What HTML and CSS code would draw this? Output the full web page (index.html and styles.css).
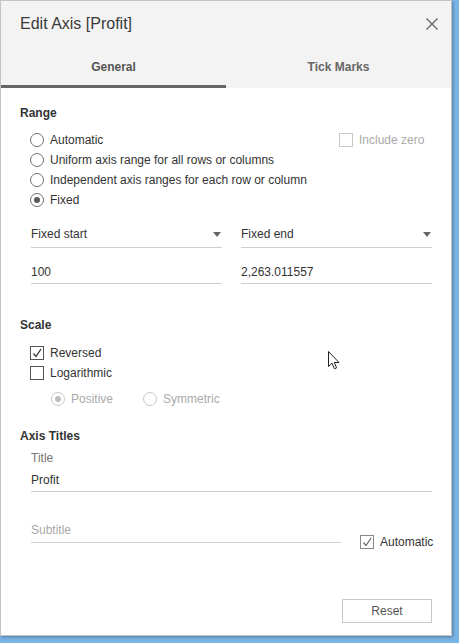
FILE: index.html
```html
<!DOCTYPE html>
<html>
<head>
<meta charset="utf-8">
<link rel="stylesheet" href="styles.css">
</head>
<body>
<div class="dialog">
  <div class="header">
    <div class="titlebar">
      <span class="title">Edit Axis [Profit]</span>
      <svg class="close" width="12" height="12" viewBox="0 0 12 12"><path d="M0.5 0.5 L11.5 11.5 M11.5 0.5 L0.5 11.5" stroke="#666" stroke-width="1.3" fill="none"/></svg>
    </div>
    <div class="tabs">
      <div class="tab active">General</div>
      <div class="tab">Tick Marks</div>
    </div>
  </div>
  <div class="content">
    <div class="heading">Range</div>
    <div class="options">
      <div class="row">
        <span class="radio"></span><span class="label">Automatic</span>
        <span class="include"><span class="check disabled"></span><span class="label muted">Include zero</span></span>
      </div>
      <div class="row"><span class="radio"></span><span class="label">Uniform axis range for all rows or columns</span></div>
      <div class="row"><span class="radio"></span><span class="label">Independent axis ranges for each row or column</span></div>
      <div class="row"><span class="radio checked"></span><span class="label">Fixed</span></div>
    </div>
    <div class="pair">
      <div class="dropdown"><span>Fixed start</span><span class="arrow"></span></div>
      <div class="dropdown"><span>Fixed end</span><span class="arrow"></span></div>
    </div>
    <div class="pair">
      <div class="input">100</div>
      <div class="input">2,263.011557</div>
    </div>

    <div class="heading scale">Scale</div>
    <div class="options">
      <div class="row"><span class="check on"><svg width="12" height="12" viewBox="0 0 12 12"><path d="M2.5 6.5 L5 9.5 L10 2" stroke="#333" stroke-width="1.3" fill="none"/></svg></span><span class="label">Reversed</span></div>
      <div class="row"><span class="check"></span><span class="label">Logarithmic</span></div>
      <div class="row sub">
        <span class="radio checked disabled"></span><span class="label muted">Positive</span>
        <span class="radio disabled gapped"></span><span class="label muted">Symmetric</span>
      </div>
    </div>

    <div class="heading axis">Axis Titles</div>
    <div class="field-label">Title</div>
    <div class="input full">Profit</div>
    <div class="subrow">
      <div class="input subtitle muted">Subtitle</div>
      <div class="auto"><span class="check light"><svg width="12" height="12" viewBox="0 0 12 12"><path d="M2.5 6.5 L5 9.5 L10 2" stroke="#666" stroke-width="1.2" fill="none"/></svg></span><span class="label">Automatic</span></div>
    </div>

    <div class="footer">
      <button class="reset">Reset</button>
    </div>
  </div>
  <svg class="cursor" width="13" height="20" viewBox="0 0 13 20"><path d="M0.5 0.5 L0.5 15.5 L4 12.2 L6.4 17.8 L8.6 16.9 L6.3 11.5 L11 11.5 Z" fill="#fff" stroke="#222" stroke-width="1" stroke-linejoin="miter"/></svg>
</div>
</body>
</html>
```

FILE: styles.css
```css
html, body {
  margin: 0;
  padding: 0;
}
body {
  background: #7ab5e8;
  width: 459px;
  height: 643px;
  overflow: hidden;
  font-family: "Liberation Sans", Arial, sans-serif;
  font-size: 12px;
  color: #333;
}
.dialog {
  position: relative;
  width: 452px;
  height: 636px;
  box-sizing: border-box;
  border: 1px solid #c4c4c4;
  background: #fff;
  box-shadow: 1px 1px 3px rgba(0, 0, 0, 0.35);
  display: flex;
  flex-direction: column;
}
.header {
  background: #f3f3f3;
}
.titlebar {
  height: 48px;
  display: flex;
  align-items: center;
  justify-content: space-between;
  padding: 0 13px 0 19px;
}
.title {
  font-size: 16px;
  color: #3a3a3a;
  margin-top: -2px;
}
.close {
  margin-top: -2px;
}
.tabs {
  display: flex;
  height: 39px;
}
.tab {
  flex: 1;
  text-align: center;
  font-weight: bold;
  color: #666;
  line-height: 14px;
  padding-top: 11px;
  box-sizing: border-box;
  border-bottom: 3px solid transparent;
}
.tab.active {
  border-bottom-color: #666;
  color: #555;
}
.content {
  flex: 1;
  display: flex;
  flex-direction: column;
  padding: 18px 19px 12px 19px;
}
.heading {
  font-weight: bold;
  line-height: 14px;
  color: #333;
  margin-bottom: 10px;
}
.heading.scale {
  margin-top: 34px;
  margin-bottom: 11px;
}
.heading.axis {
  margin-top: 20px;
  margin-bottom: 8px;
}
.options {
  padding-left: 10px;
}
.row {
  height: 20px;
  display: flex;
  align-items: center;
}
.row.sub {
  margin-top: 6px;
  padding-left: 21px;
}
.label {
  line-height: 14px;
  margin-left: 6px;
}
.muted {
  color: #aaa;
}
.radio {
  width: 14px;
  height: 14px;
  box-sizing: border-box;
  border: 1px solid #6e6e6e;
  border-radius: 50%;
  display: flex;
  align-items: center;
  justify-content: center;
  flex: none;
}
.radio.checked::after {
  content: "";
  width: 6px;
  height: 6px;
  border-radius: 50%;
  background: #5a5a5a;
}
.radio.disabled {
  border-color: #c8c8c8;
}
.radio.checked.disabled::after {
  background: #bdbdbd;
}
.radio.gapped {
  margin-left: 30px;
}
.check {
  width: 14px;
  height: 14px;
  box-sizing: border-box;
  border: 1px solid #555;
  display: flex;
  align-items: center;
  justify-content: center;
  flex: none;
  background: #fff;
}
.check.disabled {
  border-color: #c8c8c8;
}
.check.light {
  border-color: #8a8a8a;
}
.include {
  margin-left: auto;
  display: flex;
  align-items: center;
  width: 93px;
  margin-top: -1px;
}
.pair {
  display: flex;
  gap: 19px;
  padding-left: 11px;
}
.dropdown {
  flex: 1;
  display: flex;
  align-items: center;
  justify-content: space-between;
  line-height: 14px;
  padding: 17px 1px 6px 0;
  border-bottom: 1px solid #cfcfcf;
}
.arrow {
  width: 0;
  height: 0;
  border-left: 4.5px solid transparent;
  border-right: 4.5px solid transparent;
  border-top: 5px solid #666;
}
.input {
  flex: 1;
  line-height: 14px;
  padding: 17px 0 4px 0;
  border-bottom: 1px solid #cfcfcf;
}
.field-label {
  color: #777;
  line-height: 14px;
  padding-left: 11px;
}
.input.full {
  margin-left: 11px;
  padding-top: 8px;
  flex: none;
}
.subrow {
  display: flex;
  align-items: flex-end;
  padding-left: 11px;
}
.input.subtitle {
  flex: none;
  width: 310px;
  padding-top: 31px;
  padding-bottom: 5px;
}
.auto {
  display: flex;
  align-items: center;
  margin-left: 19px;
  margin-bottom: -6px;
}
.footer {
  margin-top: auto;
  display: flex;
  justify-content: flex-end;
}
.reset {
  width: 90px;
  height: 24px;
  border: 1px solid #c8c8c8;
  background: #fff;
  font-family: "Liberation Sans", Arial, sans-serif;
  font-size: 12px;
  color: #555;
  padding: 0;
}
.cursor {
  position: absolute;
  left: 327px;
  top: 350px;
}
```
